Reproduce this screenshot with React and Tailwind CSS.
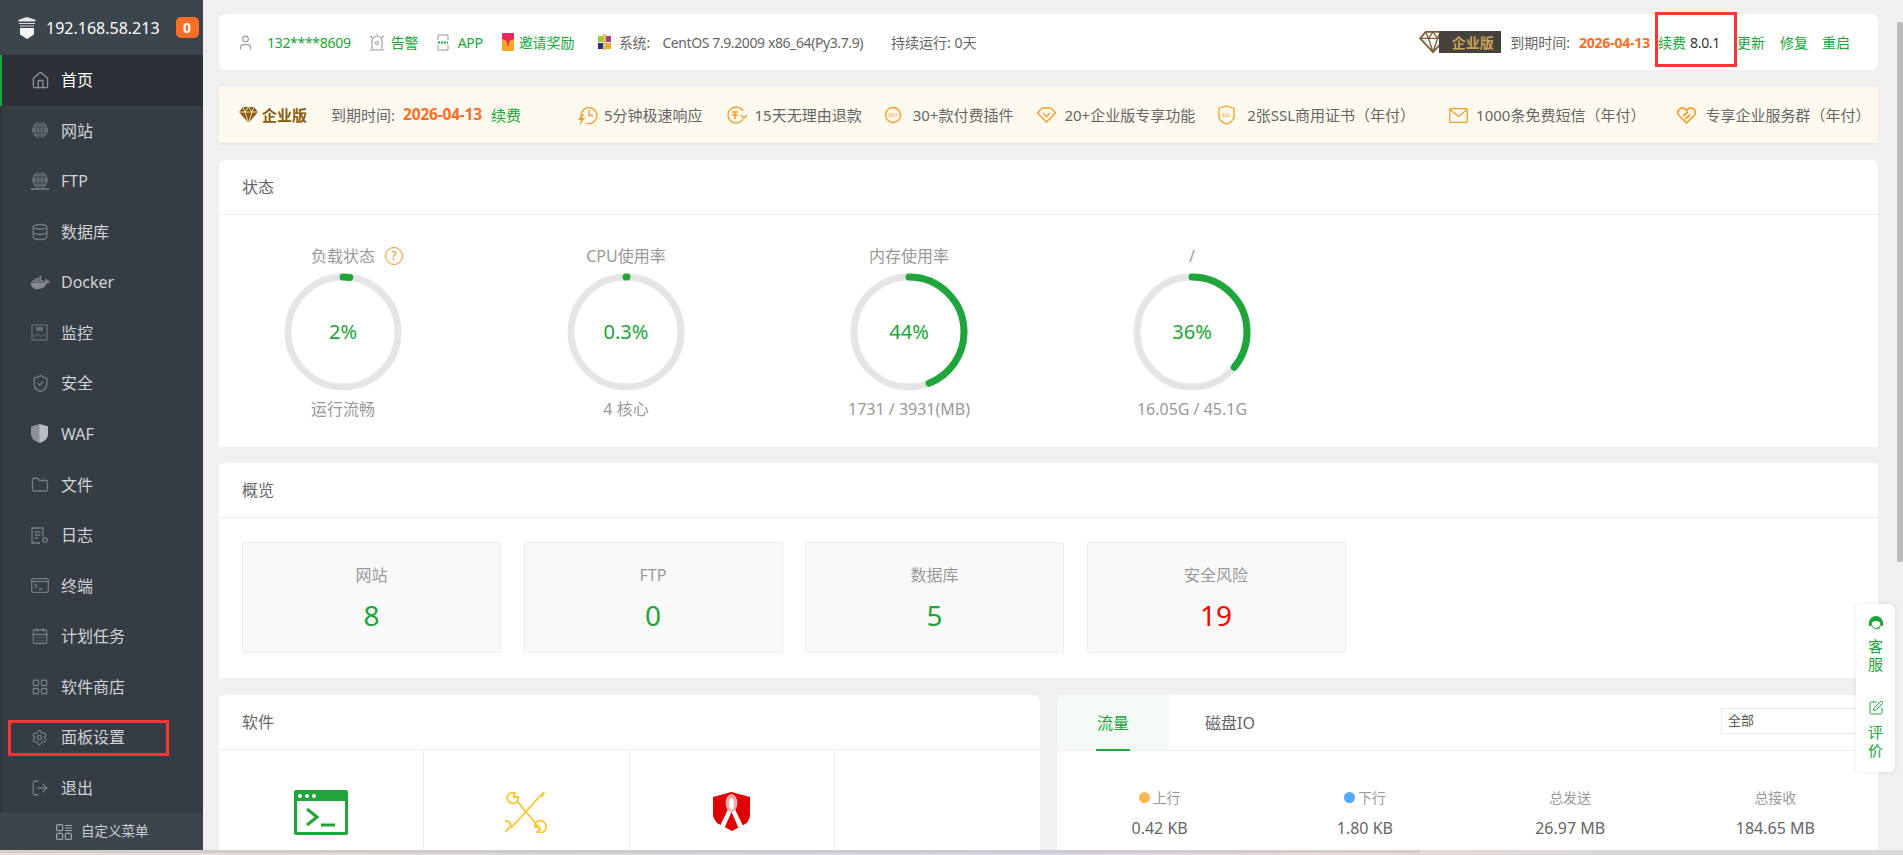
import {
  CalendarDays,
  Database,
  Folder,
  House,
  LayoutGrid,
  LogOut,
  Settings,
  ShieldCheck,
  SquarePen,
  User,
} from "lucide-react";
import { FaDocker } from "react-icons/fa";

const GlobeIcon = ({ base }) => (
  <svg width="18" height="18" viewBox="0 0 18 18" fill="none">
    <circle cx="9" cy="8" r="8" fill="#666c73" />
    <g stroke="#393f47" strokeWidth="0.8">
      <ellipse cx="9" cy="8" rx="3.6" ry="8" />
      <path d="M9 0v16M1 5h16M1 11h16" />
    </g>
    {base && <path d="M0 17h18" stroke="#7a8087" strokeWidth="1.5" />}
  </svg>
);

const MonitorIcon = () => (
  <svg width="17" height="17" viewBox="0 0 17 17" fill="none" stroke="#666c73" strokeWidth="1.3">
    <rect x="1" y="1" width="15" height="15" />
    <rect x="5" y="3" width="7" height="4" fill="#666c73" stroke="none" />
    <path d="M2 12h3l2-3 2 4 2-2h4" strokeWidth="0.9" />
  </svg>
);

const WafIcon = () => (
  <svg width="17" height="19" viewBox="0 0 17 19">
    <path d="M8.5 0 17 2.5V10c0 4.5-4 7.5-8.5 9C4 17.5 0 14.500 0 10V2.500Z" fill="#8b9096" />
    <path d="M8.5 0 17 2.500V10c0 4.500-4 7.500-8.500 9Z" fill="#b9bdc1" />
  </svg>
);

const LogIcon = () => (
  <svg width="18" height="17" viewBox="0 0 18 17" fill="none" stroke="#757b82" strokeWidth="1.3">
    <path d="M12 10V1H1v15h8" />
    <path d="M3.500 5h6M3.500 8h6M3.500 11h3" />
    <circle cx="14" cy="13" r="2.200" />
  </svg>
);

const TerminalBoxIcon = () => (
  <svg width="18" height="15" viewBox="0 0 18 15" fill="none" stroke="#757b82" strokeWidth="1.3">
    <rect x="0.700" y="0.700" width="16.600" height="13.600" rx="1.500" />
    <path d="M1 3.500h16" />
    <path d="m3.500 6 2.500 2-2.500 2M7.500 11h4" />
  </svg>
);

const lucideGray = { color: "#757b82", strokeWidth: 1.7 };

const menus = [
  { name: "首页", icon: <House size={19} {...lucideGray} color="#8c9197" />, active: true },
  { name: "网站", icon: <GlobeIcon /> },
  { name: "FTP", icon: <GlobeIcon base /> },
  { name: "数据库", icon: <Database size={18} {...lucideGray} /> },
  { name: "Docker", icon: <FaDocker size={19} color="#858a90" /> },
  { name: "监控", icon: <MonitorIcon /> },
  { name: "安全", icon: <ShieldCheck size={19} {...lucideGray} /> },
  { name: "WAF", icon: <WafIcon /> },
  { name: "文件", icon: <Folder size={18} {...lucideGray} /> },
  { name: "日志", icon: <LogIcon /> },
  { name: "终端", icon: <TerminalBoxIcon /> },
  { name: "计划任务", icon: <CalendarDays size={18} {...lucideGray} /> },
  { name: "软件商店", icon: <LayoutGrid size={18} {...lucideGray} /> },
  { name: "面板设置", icon: <Settings size={17} {...lucideGray} /> },
  { name: "退出", icon: <LogOut size={18} {...lucideGray} /> },
];

function Sidebar() {
  return (
    <aside className="flex w-[203px] shrink-0 flex-col bg-[#363c44]">
      <div className="flex h-[55px] shrink-0 items-center bg-[#3c444d] pl-[17px]">
        <svg width="20" height="22" viewBox="0 0 20 22">
          <path d="M1 3 10 0l9 3-1 1.500H2Z" fill="#e8e8e8" />
          <path d="M2 6h16v1H2zM3 8.500h14v1H3z" fill="#d9d9d9" />
          <path d="M3 11h14v6.500L10 22l-7-4.500Z" fill="#f4f4f4" />
        </svg>
        <span className="ml-[9px] text-[16px] text-white">192.168.58.213</span>
        <span className="ml-[16px] flex h-[21px] w-[23px] items-center justify-center rounded-[5px] bg-[#fc6d26] text-[14px] font-bold text-white">
          0
        </span>
      </div>
      <nav className="flex flex-1 flex-col">
        {menus.map((item) => (
          <div
            key={item.name}
            className={
              item.active
                ? "flex flex-1 items-center border-l-2 border-[#20a53a] bg-[#2c3138] text-white"
                : "flex flex-1 items-center border-l-2 border-[#30353c] text-[#ced3d8]"
            }
          >
            <span className="flex w-[29px] ml-[29px] shrink-0 justify-start">{item.icon}</span>
            <span className="ml-[1px] text-[16px]">{item.name}</span>
          </div>
        ))}
      </nav>
      <div className="flex h-[37px] shrink-0 items-center bg-[#3c444d] pl-[56px] text-[13.500px] text-[#c8cdd2]">
        <svg width="16" height="16" viewBox="0 0 16 16" fill="none" stroke="#9ea3a8" strokeWidth="1.200">
          <rect x="0.600" y="0.600" width="6" height="6" rx="1" />
          <path d="M9 1.500h7M9 4h7M9 6.500h7" />
          <rect x="0.600" y="9.400" width="6" height="6" rx="1" />
          <rect x="9.400" y="9.400" width="6" height="6" rx="1" />
        </svg>
        <span className="ml-[9px]">自定义菜单</span>
      </div>
    </aside>
  );
}

const Diamond = ({ w, h, color }) => (
  <svg width={w} height={h} viewBox="0 0 30 24" fill="none" stroke={color} strokeWidth="2">
    <path d="M7 1h16l6 7-14 15L1 8Z" />
    <path d="M1 8h28M10 8l5 15 5-15M7 1l3 7 5-7 5 7 3-7" strokeWidth="1.500" />
  </svg>
);

function TopBar() {
  return (
    <div className="flex h-[56px] items-center rounded-[6px] bg-white pl-[18px] text-[14px] text-[#666]">
      <User size={17} color="#9a9a9a" strokeWidth={1.500} />
      <span className="ml-[13px] tracking-[-0.3px] text-[#20a53a]">132****8609</span>
      <svg className="ml-[18px]" width="16" height="18" viewBox="0 0 16 18" fill="none" stroke="#999" strokeWidth="1.100">
        <path d="M3 16V8a5 5 0 0 1 10 0v8M1 17h14M8 0v1.500M1.500 3 3 4.500M14.500 3 13 4.500" />
        <circle cx="8" cy="10" r="1.500" />
      </svg>
      <span className="ml-[6px] text-[#20a53a]">告警</span>
      <svg className="ml-[18px]" width="12" height="17" viewBox="0 0 12 17" fill="none" stroke="#999" strokeWidth="1">
        <path d="M1 6V1h10v5M1 11v5h10v-5" />
        <path d="M1 8.500h10" stroke="#20a53a" strokeWidth="2" strokeDasharray="2 1" />
      </svg>
      <span className="ml-[9px] tracking-[-0.3px] text-[#20a53a]">APP</span>
      <svg className="ml-[19px]" width="12" height="18" viewBox="0 0 12 18">
        <rect width="12" height="18" rx="1" fill="#f6a623" />
        <path d="M0 1a1 1 0 0 1 1-1h10a1 1 0 0 1 1 1v5a12 12 0 0 1-12 0Z" fill="#e8275f" />
        <circle cx="6" cy="8" r="1.800" fill="#e8275f" />
        <rect x="5.300" y="8" width="1.400" height="5" fill="#e8275f" />
      </svg>
      <span className="ml-[5px] text-[#20a53a]">邀请奖励</span>
      <svg className="ml-[22px]" width="15" height="16" viewBox="0 0 15 16">
        <rect x="1" y="2" width="6" height="6" fill="#a4c639" />
        <rect x="8" y="2" width="6" height="6" fill="#a8417a" />
        <rect x="1" y="9" width="6" height="6" fill="#2f2f7f" />
        <rect x="8" y="9" width="6" height="6" fill="#f1a82c" />
        <rect x="6" y="0" width="3" height="16" fill="#d8c46a" />
      </svg>
      <span className="ml-[7px]">系统:</span>
      <span className="ml-[12px] tracking-[-0.4px]">CentOS 7.9.2009 x86_64(Py3.7.9)</span>
      <span className="ml-[28px]">持续运行: 0天</span>
      <div className="ml-auto flex items-center pr-[28px]">
        <Diamond w={28} h={22} color="#7a5f3a" />
        <span className="-ml-[8px] flex h-[22px] w-[62px] items-center justify-center bg-[#45413c] pl-[5px] text-[14px] font-bold text-[#c5a25d]">
          企业版
        </span>
        <span className="ml-[9px]">到期时间:</span>
        <span className="ml-[9px] font-bold tracking-[-0.2px] text-[#fc6d26]">2026-04-13</span>
        <span className="ml-[8px] text-[#20a53a]">续费</span>
        <span className="ml-[4px] tracking-[-0.3px] text-[#333]">8.0.1</span>
        <span className="ml-[17px] text-[#20a53a]">更新</span>
        <span className="ml-[15px] text-[#20a53a]">修复</span>
        <span className="ml-[14px] text-[#20a53a]">重启</span>
      </div>
    </div>
  );
}

const orange = { fill: "none", stroke: "#f79c2b", strokeWidth: 1.300 };

const perks = [
  {
    text: "5分钟极速响应",
    ml: "ml-[56px]",
    gap: "ml-[6px]",
    icon: (
      <svg width="21" height="22" viewBox="0 0 21 22" {...orange}>
        <path d="M4 12a8 8 0 1 1 5 7" />
        <path d="M12 6v5.500h4" />
        <path d="M5 10 1 16h3l-2 6 6-8H5l2-4Z" fill="#f79c2b" stroke="none" />
      </svg>
    ),
  },
  {
    text: "15天无理由退款",
    ml: "ml-[24px]",
    gap: "ml-[8px]",
    icon: (
      <svg width="20" height="18" viewBox="0 0 20 18" {...orange}>
        <path d="M16 5A8 8 0 1 0 16 13" />
        <path d="m14 9 3 3 3-3" />
        <path d="M5 6h6M5 9h6M8 6v7" strokeWidth="1.600" />
      </svg>
    ),
  },
  {
    text: "30+款付费插件",
    ml: "ml-[23px]",
    gap: "ml-[12px]",
    icon: (
      <svg width="16" height="18" viewBox="0 0 16 18" {...orange}>
        <circle cx="8" cy="9" r="7.500" />
        <text x="8" y="11" fontSize="6" textAnchor="middle" fill="#f79c2b" stroke="none">30+</text>
      </svg>
    ),
  },
  {
    text: "20+企业版专享功能",
    ml: "ml-[24px]",
    gap: "ml-[8px]",
    icon: (
      <svg width="19" height="16" viewBox="0 0 19 16" {...orange}>
        <path d="M5 1h9l4.500 5-9 9-9-9Z" />
        <path d="m6 6 3.500 3.500L13 6" />
      </svg>
    ),
  },
  {
    text: "2张SSL商用证书（年付）",
    ml: "ml-[23px]",
    gap: "ml-[12px]",
    icon: (
      <svg width="17" height="20" viewBox="0 0 17 20" {...orange}>
        <path d="M8.500 1 16 3.500V12c0 3-4 6-7.500 7C5 18 1 15 1 12V3.500Z" />
        <text x="8.500" y="12" fontSize="5.500" textAnchor="middle" fill="#f79c2b" stroke="none">SSL</text>
      </svg>
    ),
  },
  {
    text: "1000条免费短信（年付）",
    ml: "ml-[34px]",
    gap: "ml-[8px]",
    icon: (
      <svg width="19" height="15" viewBox="0 0 19 15" {...orange}>
        <rect x="0.700" y="0.700" width="17.600" height="13.600" rx="1" />
        <path d="m1 1.500 8.500 7 8.500-7" />
      </svg>
    ),
  },
  {
    text: "专享企业服务群（年付）",
    ml: "ml-[32px]",
    gap: "ml-[9px]",
    icon: (
      <svg width="19" height="17" viewBox="0 0 19 17" {...orange} strokeWidth="1.700">
        <path d="M9.500 16 1.500 8a4.500 4.500 0 0 1 6.500-6l1.500 1.500L11 2a4.500 4.500 0 0 1 6.500 6Z" />
        <path d="m6 9 5-4M8 12l5-4" />
      </svg>
    ),
  },
];

function Banner() {
  return (
    <div className="mt-[17px] flex h-[56px] items-center bg-[#fffaf0] pl-[20px] text-[15px] text-[#666] shadow-[0_1px_2px_rgba(0,0,0,0.08)]">
      <svg width="19" height="16" viewBox="0 0 19 16">
        <path d="M4 0h11l4 5-9.500 11L0 5Z" fill="#8a5a0a" />
        <path d="M0 5h19M6 5l3.500 11L13 5M4 0l2 5 3.500-5 3.500 5 2-5" stroke="#fffaf0" strokeWidth="0.800" fill="none" />
      </svg>
      <span className="ml-[4px] font-bold text-[#8a5a0a]">企业版</span>
      <span className="ml-[24px]">到期时间:</span>
      <span className="ml-[8px] text-[15.500px] font-bold tracking-[-0.2px] text-[#fc6d26]">2026-04-13</span>
      <span className="ml-[9px] text-[#20a53a]">续费</span>
      {perks.map((perk) => (
        <div key={perk.text} className={"flex items-center " + perk.ml}>
          {perk.icon}
          <span className={perk.gap}>{perk.text}</span>
        </div>
      ))}
    </div>
  );
}

const gauges = [
  { title: "负载状态", help: true, value: "2%", pct: 2, sub: "运行流畅" },
  { title: "CPU使用率", value: "0.3%", pct: 0.3, sub: "4 核心" },
  { title: "内存使用率", value: "44%", pct: 44, sub: "1731 / 3931(MB)" },
  { title: "/", value: "36%", pct: 36, sub: "16.05G / 45.1G" },
];

function Gauge({ item }) {
  const len = (2 * Math.PI * 55 * item.pct) / 100;
  return (
    <div className="flex w-[118px] flex-col items-center whitespace-nowrap text-[16px] text-[#999]">
      <div className="relative flex h-[24px] items-center">
        <span>{item.title}</span>
        {item.help && (
          <span className="absolute left-[74px] flex h-[18px] w-[18px] items-center justify-center rounded-full border border-[#f7912c] text-[13px] text-[#f7912c]">
            ?
          </span>
        )}
      </div>
      <div className="relative mt-[5px] flex h-[118px] w-[118px] items-center justify-center">
        <svg className="absolute inset-0 -rotate-90" width="118" height="118" viewBox="0 0 118 118" fill="none">
          <circle cx="59" cy="59" r="55" stroke="#e5e5e5" strokeWidth="7" />
          <circle
            cx="59"
            cy="59"
            r="55"
            stroke="#20a53a"
            strokeWidth="7"
            strokeLinecap="round"
            strokeDasharray={`${len} 999`}
          />
        </svg>
        <span className="text-[20px] text-[#20a53a]">{item.value}</span>
      </div>
      <div className="mt-[6px] h-[24px] leading-[24px]">{item.sub}</div>
    </div>
  );
}

const CardTitle = ({ children }) => (
  <div className="flex h-[55px] items-center border-b border-[#efefef] pl-[23px] text-[16px] text-[#666]">
    {children}
  </div>
);

function StatusCard() {
  return (
    <section className="mt-[17px] h-[287px] rounded-t-[6px] bg-white">
      <CardTitle>状态</CardTitle>
      <div className="flex gap-[165px] pl-[65px] pt-[29px]">
        {gauges.map((item) => (
          <Gauge key={item.title} item={item} />
        ))}
      </div>
    </section>
  );
}

const overview = [
  { name: "网站", value: "8", color: "text-[#20a53a]" },
  { name: "FTP", value: "0", color: "text-[#20a53a]" },
  { name: "数据库", value: "5", color: "text-[#20a53a]" },
  { name: "安全风险", value: "19", color: "text-[#ff0000]" },
];

function OverviewCard() {
  return (
    <section className="mt-[16px] h-[215px] rounded-t-[6px] bg-white">
      <CardTitle>概览</CardTitle>
      <div className="flex gap-[22.500px] pl-[23px] pt-[24px]">
        {overview.map((item) => (
          <div
            key={item.name}
            className="flex h-[111px] w-[259px] flex-col items-center border border-[#efefef] bg-[#f9f9f9] pt-[20px] rounded-[2px]"
          >
            <span className="text-[16px] leading-[24px] text-[#999]">{item.name}</span>
            <span className={"mt-[8px] text-[28px] leading-[40px] " + item.color}>{item.value}</span>
          </div>
        ))}
      </div>
    </section>
  );
}

function SoftwareCard() {
  return (
    <section className="w-[821px] shrink-0 overflow-hidden rounded-t-[6px] bg-white">
      <CardTitle>软件</CardTitle>
      <div className="grid h-[100px] grid-cols-4">
        <div className="flex justify-center border-r border-[#ebebf5] pt-[40px]">
          <svg width="54" height="45" viewBox="0 0 54 45">
            <rect width="54" height="45" rx="2" fill="#20a53a" />
            <rect x="3" y="11" width="48" height="31" fill="#fff" />
            <circle cx="6" cy="6" r="2" fill="#fff" />
            <circle cx="13" cy="6" r="2" fill="#fff" />
            <circle cx="20" cy="6" r="2" fill="#fff" />
            <path d="m13 19 10 8-10 8" fill="none" stroke="#20a53a" strokeWidth="3" />
            <path d="M27 35h14" stroke="#20a53a" strokeWidth="3" />
          </svg>
        </div>
        <div className="flex justify-center border-r border-[#ebebf5] pt-[42px]">
          <svg width="42" height="41" viewBox="0 0 42 41" fill="none" stroke="#fdc52e" strokeWidth="1.800">
            <path d="M12 9 36 38M36 3 6 36" />
            <path d="M10 1a6 6 0 0 0-8 5 6 6 0 0 0 8 5 5 5 0 0 0 3-6H9V2Z" />
            <path d="M32 40a6 6 0 0 0 9-5 6 6 0 0 0-8-6 5 5 0 0 0-3 6h4v4Z" />
            <rect x="-3" y="30" width="7" height="11" rx="3" transform="rotate(42 2 35)" />
            <path d="M39 0l-3 5" strokeWidth="2.500" />
          </svg>
        </div>
        <div className="flex justify-center border-r border-[#ebebf5] pt-[42px]">
          <svg width="37" height="39" viewBox="0 0 37 39">
            <path d="M18.500 0 37 5v18c0 3-2 6-3 8l-15 8-15-8c-1-2-4-5-4-8V5Z" fill="#e00000" />
            <path d="M18.500 10 6 36l5 1 7.500-17L26 37l5-1Z" fill="#fff" />
            <ellipse cx="18.500" cy="11" rx="6" ry="9" fill="#f5a8a8" />
            <ellipse cx="18.500" cy="12" rx="2.500" ry="6" fill="#fff" />
          </svg>
        </div>
        <div />
      </div>
    </section>
  );
}

const traffic = [
  { label: "上行", value: "0.42 KB", dot: "bg-[#f7b851]" },
  { label: "下行", value: "1.80 KB", dot: "bg-[#52a9ff]" },
  { label: "总发送", value: "26.97 MB" },
  { label: "总接收", value: "184.65 MB" },
];

function TrafficCard() {
  return (
    <section className="w-[821px] shrink-0 overflow-hidden rounded-t-[6px] bg-white">
      <div className="flex h-[56px] items-center border-b border-[#efefef] text-[16px] text-[#666]">
        <div className="relative flex h-full w-[112px] items-center justify-center bg-[#f5faf6] text-[#20a53a]">
          流量
          <span className="absolute bottom-[-1px] left-[39px] h-[2px] w-[34px] bg-[#20a53a]" />
        </div>
        <span className="ml-[36px]">磁盘IO</span>
        <div className="ml-auto mb-[3px] flex h-[26px] w-[157px] items-center border border-[#ececec] pl-[6px] text-[13px] text-[#555]">
          全部
        </div>
      </div>
      <div className="grid grid-cols-4 pt-[36px]">
        {traffic.map((item) => (
          <div key={item.label} className="flex flex-col items-center">
            <div className="flex h-[20px] items-center text-[14px] text-[#999]">
              {item.dot && <span className={"mr-[3px] h-[11px] w-[11px] rounded-full " + item.dot} />}
              {item.label}
            </div>
            <div className="mt-[9px] text-[16px] text-[#666]">{item.value}</div>
          </div>
        ))}
      </div>
    </section>
  );
}

function SidePanel() {
  return (
    <div className="absolute left-[1856px] top-[604px] flex h-[168px] w-[39px] flex-col items-center rounded-[6px] bg-white pt-[11px] text-[15px] leading-[18px] text-[#20a53a] shadow-[0_0_4px_rgba(0,0,0,0.1)]">
      <svg width="16" height="16" viewBox="0 0 16 16">
        <path d="M1 8a7 7 0 0 1 14 0l-1 2c-1-3-3-4-6-4S3 7 2 10Z" fill="#20a53a" />
        <circle cx="8" cy="9" r="4.500" fill="none" stroke="#20a53a" strokeWidth="1" />
        <path d="M1 6h2v5H1zM13 6h2v5h-2z" fill="#20a53a" />
        <path d="M9 14c2 0 3-1 3.500-2" stroke="#20a53a" fill="none" />
      </svg>
      <span className="mt-[6px]">客</span>
      <span>服</span>
      <SquarePen className="mt-[27px]" size={16} strokeWidth={1.500} />
      <span className="mt-[7px]">评</span>
      <span>价</span>
    </div>
  );
}

export default function App() {
  return (
    <div className="relative flex h-[855px] w-[1903px] flex-col overflow-hidden bg-[#f0f0f0] font-['Noto_Sans','Noto_Sans_CJK_SC',sans-serif]">
      <div className="flex h-[850px] shrink-0">
        <Sidebar />
        <main className="w-[1675px] overflow-hidden pl-[16px] pt-[14px]">
          <TopBar />
          <Banner />
          <StatusCard />
          <OverviewCard />
          <div className="mt-[17px] flex h-[155px] gap-[17px]">
            <SoftwareCard />
            <TrafficCard />
          </div>
        </main>
      </div>
      <div className="h-[5px] shrink-0 bg-[linear-gradient(90deg,#f0dcd8,#d8d8d8_30%,#d8d4e8_55%,#f0d8d8_70%,#d8d8d8_85%)]" />

      {/* scrollbars and marks drawn on top of the screenshot */}
      <div className="absolute left-[1897px] top-[22px] h-[540px] w-[6px] bg-[#bdbdbd]" />
      <div className="absolute left-0 top-[850px] h-[3px] w-[1420px] bg-[#c8c8c8]/70" />
      <SidePanel />
      <div className="absolute left-[8px] top-[720px] h-[36px] w-[161px] border-[3px] border-[#f93636]" />
      <div className="absolute left-[1655px] top-[12px] h-[55px] w-[82px] border-[3px] border-[#f93636]" />
    </div>
  );
}
